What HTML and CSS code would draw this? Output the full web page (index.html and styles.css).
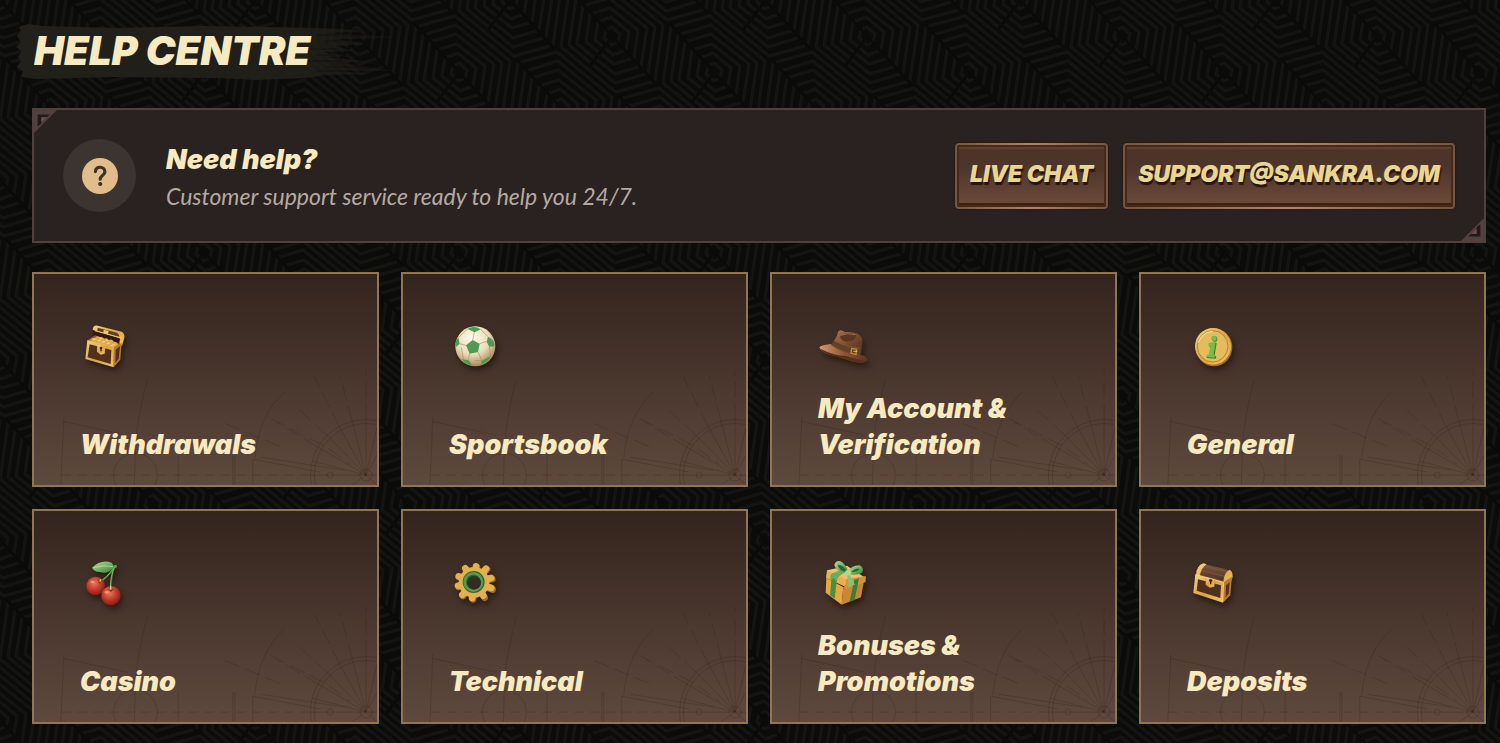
FILE: index.html
```html
<!DOCTYPE html>
<html lang="en">
<head>
    <meta charset="UTF-8">
    <meta name="viewport" content="width=device-width, initial-scale=1.0">
    <title>Help Centre</title>
    <link rel="stylesheet" href="styles.css">
</head>
<body>
    <!-- Shared gradients -->
    <svg class="defs" width="0" height="0" aria-hidden="true">
        <defs>
            <linearGradient id="gold" x1="0" y1="0" x2="1" y2="1">
                <stop offset="0" stop-color="#f6d67c"/>
                <stop offset=".5" stop-color="#dca447"/>
                <stop offset="1" stop-color="#f0c564"/>
            </linearGradient>
            <linearGradient id="wood" x1="0" y1="0" x2="0" y2="1">
                <stop offset="0" stop-color="#7d5740"/>
                <stop offset="1" stop-color="#432619"/>
            </linearGradient>
            <radialGradient id="ball" cx=".42" cy=".3" r=".75">
                <stop offset="0" stop-color="#fffbea"/>
                <stop offset=".55" stop-color="#e9dcb9"/>
                <stop offset="1" stop-color="#a37a48"/>
            </radialGradient>
            <radialGradient id="cherry" cx=".42" cy=".35" r=".7">
                <stop offset="0" stop-color="#ee7856"/>
                <stop offset=".5" stop-color="#c23e2b"/>
                <stop offset="1" stop-color="#7c150f"/>
            </radialGradient>
            <linearGradient id="leaf" x1="0" y1="0" x2="1" y2="1">
                <stop offset="0" stop-color="#b5e09a"/>
                <stop offset="1" stop-color="#357f34"/>
            </linearGradient>
            <linearGradient id="felt" x1="0" y1="0" x2="1" y2="1">
                <stop offset="0" stop-color="#b07a50"/>
                <stop offset=".5" stop-color="#7c4d31"/>
                <stop offset="1" stop-color="#4a2716"/>
            </linearGradient>
            <linearGradient id="brim" x1="0" y1="0" x2="1" y2="0">
                <stop offset="0" stop-color="#d59a6b"/>
                <stop offset=".5" stop-color="#8f5836"/>
                <stop offset="1" stop-color="#5a3420"/>
            </linearGradient>
        </defs>
    </svg>

    <main class="page">
        <h1 class="title">HELP CENTRE</h1>

        <!-- Support banner -->
        <section class="banner">
            <svg class="corner corner-top" viewBox="0 0 27 27" aria-hidden="true">
                <path d="M0 0h27L0 27z" fill="#51403b"/>
                <path d="M5 19V6h13l-3 3H9v7z" fill="#211a18"/>
                <path d="M9 14V9h6z" fill="#69504a"/>
            </svg>
            <div class="help-icon">
                <svg viewBox="0 0 36 36" width="36" height="36" aria-hidden="true">
                    <circle cx="18" cy="18" r="18" fill="#e2bd8b"/>
                    <path d="M13.4 13.6c0-6.1 9.5-5.6 9.5.2 0 3.8-4.7 3.6-4.7 7.4" fill="none" stroke="#3b312d" stroke-width="3.2" stroke-linecap="round"/>
                    <circle cx="18.2" cy="26" r="2.1" fill="#3b312d"/>
                </svg>
            </div>
            <div class="banner-text">
                <h2>Need help?</h2>
                <p>Customer support service ready to help you 24/7.</p>
            </div>
            <div class="banner-actions">
                <button class="btn" type="button">LIVE CHAT</button>
                <button class="btn" type="button">SUPPORT@SANKRA.COM</button>
            </div>
            <svg class="corner corner-bottom" viewBox="0 0 27 27" aria-hidden="true">
                <path d="M0 0h27L0 27z" fill="#51403b"/>
                <path d="M5 19V6h13l-3 3H9v7z" fill="#211a18"/>
                <path d="M9 14V9h6z" fill="#69504a"/>
            </svg>
        </section>

        <!-- Topics -->
        <nav class="topics" aria-label="Help topics">
            <a class="card" href="#withdrawals">
                <svg class="icon" viewBox="60 39 144 144" aria-hidden="true">
                    <path d="M99 61l88 24-6 23-80-28z" fill="#35190e"/>
                    <path d="M98 59q2-15 15-12l72 18q10 5 8 19l-7 23-8-3 1-19z" fill="url(#gold)"/>
                    <path d="M113 53l58 15q8 5 7 13l-66-18z" fill="#5d3d2b"/>
                    <path d="M104 66l76 22-6 14-62-20z" fill="#35190e"/>
                    <path d="M104 62l80 22" stroke="#f2cd78" stroke-width="3"/>
                    <path d="M131 59l15 4-2 10-14-4z" fill="#f0c765"/>
                    <path d="M83 91l22-15 79 27-22 20z" fill="#925b20"/>
                    <path d="M90 91q5-11 15-7 5-9 14-2 7-4 14 4 9-4 13 4 11-5 15 5 10-1 14 9l-17 14z" fill="#dfac49"/>
                    <path d="M99 90l8-4m7 7l9-4m3 8l10-3m4 8l10-4m3 9l10-3M118 83l7 3m13 4l6 3" stroke="#f8dd8c" stroke-width="3"/>
                    <path d="M82 90l80 21-1 61-85-25z" fill="url(#gold)"/>
                    <path d="M89 103l65 17-2 42-69-20z" fill="#50301f"/>
                    <path d="M162 111l23-12-4 50-20 23z" fill="#b57b30"/>
                    <path d="M167 119l13-11-4 38-10 13z" fill="#51301e"/>
                    <path d="M112 104l24 6-2 21-12 3-11-9z" fill="url(#gold)"/>
                    <circle cx="123" cy="114" r="4" fill="#3b200f"/>
                    <path d="M123 114v10" stroke="#3b200f" stroke-width="4"/>
                </svg>
                <span class="card-title">Withdrawals</span>
            </a>
            <a class="card" href="#sportsbook">
                <svg class="icon" viewBox="57 39 144 144" aria-hidden="true">
                    <circle cx="136" cy="109" r="60" fill="url(#ball)"/>
                    <g fill="#4f9a54">
                        <path d="M128 90l21 11-5 25-25 5-11-25z"/>
                        <path d="M112 57q20-12 40 1l-18 9z"/>
                        <path d="M77 112q-3-18 8-31l4 20z"/>
                        <path d="M174 80q20 9 20 29l-16 1-8-14z"/>
                        <path d="M95 147l21 4 12 16q-20 0-33-20z"/>
                        <path d="M154 153l28-15q-7 16-27 26z"/>
                    </g>
                    <path d="M128 90l5-23m16 34l21-7m-26 32l12 27m-37-22l-5 20m-6-45l-20-5m-1-20l25-24m40 1l22 22m4 30l4 28m-88-25l6 34m33 5l26-1" fill="none" stroke="#a6906a" stroke-width="2"/>
                </svg>
                <span class="card-title">Sportsbook</span>
            </a>
            <a class="card" href="#account">
                <svg class="icon" viewBox="54 39 144 144" aria-hidden="true">
                    <path d="M94 102q-28 2-36 10 5 19 48 26l54 17q35 8 44-4-2-13-28-18z" fill="url(#brim)"/>
                    <path d="M61 116q38 20 78 22 43 15 62 14-15 12-57-2l-42-12q-35-7-41-22z" fill="#592e1b"/>
                    <path d="M93 105q18-22 21-40 8-9 20 1 43-3 52 18 4 16-4 53-51-4-89-32z" fill="url(#felt)"/>
                    <path d="M120 78q20-16 49-4-1 20-31 21-18-4-18-17z" fill="#5c3622"/>
                    <path d="M122 76q20-9 44-2" fill="none" stroke="#a06f4b" stroke-width="3"/>
                    <path d="M102 92q35 20 80 23l-2 21q-50-4-87-31z" fill="#634029"/>
                    <path d="M103 92q35 20 79 22M94 105q40 26 86 31" fill="none" stroke="#8a5a38" stroke-width="2"/>
                    <path d="M155 115l15 3-2 15-15-3z" fill="none" stroke="#bd8c35" stroke-width="4"/>
                    <path d="M160 124h12" stroke="#e3bd68" stroke-width="3"/>
                </svg>
                <span class="card-title">My Account &amp; Verification</span>
            </a>
            <a class="card" href="#general">
                <svg class="icon" viewBox="51 39 144 144" aria-hidden="true">
                    <ellipse cx="132" cy="112" rx="55" ry="57" fill="#a87124"/>
                    <ellipse cx="129" cy="109" rx="54" ry="55" fill="url(#gold)"/>
                    <ellipse cx="128" cy="109" rx="46" ry="47" fill="#e4bc5d" stroke="#b7842f" stroke-width="3"/>
                    <path d="M85 98q10-31 43-34" fill="none" stroke="#ffec9d" stroke-width="3"/>
                    <path d="M119 102l21-4-6 38 5 4-2 6-27-2 2-6 6-2 4-24-5-3z" fill="#3d7f2d"/>
                    <path d="M116 99l21-4-6 38 4 4-1 6-25-2 1-6 7-2 4-24-6-3z" fill="#78bd48"/>
                    <circle cx="134" cy="87" r="8" fill="#3d7f2d"/>
                    <circle cx="132" cy="85" r="8" fill="#79bd4b"/>
                </svg>
                <span class="card-title">General</span>
            </a>
            <a class="card" href="#casino">
                <svg class="icon" viewBox="60 45 144 144" aria-hidden="true">
                    <path d="M164 64q-16 30-48 50M164 64q-12 30-12 72" fill="none" stroke="#427e3a" stroke-width="5"/>
                    <path d="M163 64q-16 29-45 47M164 64q-13 30-13 67" fill="none" stroke="#a8cb77" stroke-width="2"/>
                    <circle cx="166" cy="64" r="5" fill="#59a14d"/>
                    <path d="M96 68q28-27 59-15l8 12q-19 25-45 16-16-1-22-13z" fill="url(#leaf)"/>
                    <path d="M101 68q26-9 58-3" fill="none" stroke="#cceaaf" stroke-width="2"/>
                    <circle cx="107" cy="123" r="28" fill="url(#cherry)"/>
                    <circle cx="153" cy="152" r="29" fill="url(#cherry)"/>
                    <path d="M114 105q7 5 13-1l-8 12zM143 131q10 6 19-1l-9 11z" fill="#71331c"/>
                    <path d="M123 103l-4 7m33 12v12" stroke="#b9d583" stroke-width="4"/>
                    <ellipse cx="97" cy="111" rx="6" ry="4" fill="#ffb08c" opacity=".65"/>
                    <ellipse cx="140" cy="142" rx="7" ry="4" fill="#ffb08c" opacity=".65"/>
                </svg>
                <span class="card-title">Casino</span>
            </a>
            <a class="card" href="#technical">
                <svg class="icon" viewBox="57 45 144 144" aria-hidden="true">
                    <g stroke="#a06a25" stroke-width="20" stroke-linecap="round">
                        <path d="M141 67l-12 96M108 73l56 85M88 97l100 37M86 126l101-24M99 153l72-80"/>
                    </g>
                    <g stroke="#e3b04f" stroke-width="20" stroke-linecap="round">
                        <path d="M138 64l-12 95M106 70l54 82M86 94l98 35M84 122l99-23M97 149l71-78"/>
                    </g>
                    <circle cx="132" cy="112" r="46" fill="#e3b04f"/>
                    <circle cx="131" cy="111" r="33" fill="#2f6a2d"/>
                    <circle cx="130" cy="111" r="26" fill="none" stroke="#5c984f" stroke-width="8"/>
                    <circle cx="132" cy="113" r="21" fill="#243c20"/>
                    <circle cx="135" cy="115" r="17" fill="#3a2923"/>
                </svg>
                <span class="card-title">Technical</span>
            </a>
            <a class="card" href="#bonuses">
                <svg class="icon" viewBox="54 45 144 144" aria-hidden="true">
                    <path d="M79 99l51 27-5 53-48-36z" fill="#e8a743"/>
                    <path d="M130 126l62-18-9 49-58 22z" fill="#c98636"/>
                    <path d="M82 76l59-14 56 37-60 21-57-26z" fill="#f0c173"/>
                    <path d="M81 76l56 27v23l-59-27z" fill="#edae4d"/>
                    <path d="M137 103l60-10v18l-60 21z" fill="#d69439"/>
                    <path d="M96 84l16 8-8 69-14-11z" fill="#4d8e3d"/>
                    <path d="M163 104l14-4-13 64-15 6z" fill="#3a7c39"/>
                    <path d="M93 88q25-17 43-7l-20 14-9 14-5-9-13 5z" fill="#6cab5c"/>
                    <path d="M147 85l18 35-10-1-9 9-5-42z" fill="#86c277"/>
                    <path d="M138 83q-35-7-35-24 7-17 24-7 17 16 17 32z" fill="url(#leaf)"/>
                    <path d="M145 83q6-22 34-22 15 8 7 23-18 9-40 3z" fill="url(#leaf)"/>
                    <path d="M113 59q17-1 27 21-24-3-27-21M153 81q12-13 25-10 1 8-25 10" fill="#236b2e"/>
                    <ellipse cx="144" cy="83" rx="9" ry="8" fill="#a9dc90"/>
                </svg>
                <span class="card-title">Bonuses &amp; Promotions</span>
            </a>
            <a class="card" href="#deposits">
                <svg class="icon" viewBox="51 45 144 144" aria-hidden="true">
                    <path d="M78 94q2-32 19-38l67 15q23 5 22 35l-16 17z" fill="url(#wood)"/>
                    <path d="M105 65l65 14M94 77l70 17M89 90l72 19" stroke="#85614a" stroke-width="2"/>
                    <path d="M78 90q2-29 22-35l10 3q-18 11-21 38zM160 113q1-29 18-39 11 4 10 22l-7 18-21 11z" fill="url(#gold)"/>
                    <path d="M76 88l86 23-3 62-89-29z" fill="url(#gold)"/>
                    <path d="M84 103l69 18-2 38-71-22z" fill="#50301f"/>
                    <path d="M162 111l24-16-5 56-22 22z" fill="#b8792b"/>
                    <path d="M168 121l11-9-3 33-9 12z" fill="#56331f"/>
                    <path d="M108 96l27 7-2 22-14 3-12-9z" fill="url(#gold)" stroke="#8d5a20" stroke-width="1"/>
                    <circle cx="122" cy="106" r="5" fill="#3b200f"/>
                    <path d="M122 106v12" stroke="#3b200f" stroke-width="4"/>
                    <path d="M77 89l84 23-2 57" fill="none" stroke="#ffe090" stroke-width="2"/>
                </svg>
                <span class="card-title">Deposits</span>
            </a>
        </nav>
    </main>
</body>
</html>
```
FILE: styles.css
```css
* {
    box-sizing: border-box;
}
body {
    margin: 0;
    font-family: Inter, Lato, "Liberation Sans", sans-serif;
    font-style: italic;
    /* single-storey a */
    font-feature-settings: "cv11";
    color: #f8eac0;
    background-color: #0b0b09;
    /* nested hexagon maze, repeats every 255 x 180 */
    background-image: url("data:image/svg+xml,%3Csvg xmlns='http://www.w3.org/2000/svg' xmlns:xlink='http://www.w3.org/1999/xlink' width='255' height='180'%3E%3Cdefs%3E%3Cg id='h' fill='none' stroke='%23141412' stroke-width='3' stroke-linejoin='round'%3E%3Cpath d='M-51 11-43-45-4-56 51-11 43 45 4 56ZM-43 9-36-37-3-47 43-9 36 37 3 47ZM-35 8-29-30-3-38 35-8 29 30 3 38ZM-26 6-22-22-2-28 26-6 22 22 2 28ZM-17 4-14-14-1-19 17-4 14 14 1 19ZM-8 2-6-6 0-9 8-2 6 6 0 9Z'/%3E%3Cpath d='M-44-48 44 48M2-2-22 30' stroke='%230a0a09'/%3E%3C/g%3E%3C/defs%3E%3Cuse xlink:href='%23h'/%3E%3Cuse xlink:href='%23h' x='255'/%3E%3Cuse xlink:href='%23h' y='180'/%3E%3Cuse xlink:href='%23h' x='255' y='180'/%3E%3Cuse xlink:href='%23h' x='102' y='36'/%3E%3Cuse xlink:href='%23h' x='102' y='216'/%3E%3Cuse xlink:href='%23h' x='204' y='72'/%3E%3Cuse xlink:href='%23h' x='-51' y='72'/%3E%3Cuse xlink:href='%23h' x='51' y='108'/%3E%3Cuse xlink:href='%23h' x='306' y='108'/%3E%3Cuse xlink:href='%23h' x='153' y='144'/%3E%3Cuse xlink:href='%23h' x='153' y='-36'/%3E%3C/svg%3E");
}
.defs {
    position: absolute;
}
.page {
    padding: 22px 14px 20px 32px;
}

/* Title on a brush stroke */
.title {
    width: 380px;
    margin: 0 0 28px -16px;
    padding: 0 0 0 18px;
    font-size: 40px;
    line-height: 58px;
    font-weight: 900;
    white-space: nowrap;
    background: url("data:image/svg+xml,%3Csvg xmlns='http://www.w3.org/2000/svg' viewBox='0 0 380 58'%3E%3Cdefs%3E%3ClinearGradient id='g'%3E%3Cstop stop-color='%2322201a'/%3E%3Cstop offset='.75' stop-color='%2322201a' stop-opacity='.9'/%3E%3Cstop offset='1' stop-color='%2322201a' stop-opacity='.2'/%3E%3C/linearGradient%3E%3C/defs%3E%3Cpath fill='url(%23g)' d='M3 5 12 2 26 4 100 6 190 4 300 6 343 8 343 10 310 11 378 15 378 16 322 17 350 22 320 24 337 29 305 30 332 34 310 35 349 39 325 41 378 49 325 49 353 52 310 53 290 56 240 58 200 56 100 55 20 57 5 55 7 49 1 45 5 39 2 35 6 29 0 25 5 20 1 14 5 9Z'/%3E%3Cg stroke='%230f0f0c' stroke-width='1' opacity='.6'%3E%3Cpath d='M300 13h52M310 19h55M290 27h40M300 33h50M290 39h40M310 45h52M300 49h40'/%3E%3C/g%3E%3C/svg%3E") left center / 380px 58px no-repeat;
}

/* Support banner */
.banner {
    position: relative;
    display: flex;
    align-items: center;
    min-height: 135px;
    margin-bottom: 29px;
    padding: 0 29px;
    border: 2px solid #51403b;
    background: #292220;
}
.corner {
    position: absolute;
    width: 25px;
    height: 25px;
}
.corner-top {
    top: -1px;
    left: -1px;
}
.corner-bottom {
    right: -1px;
    bottom: -1px;
    transform: rotate(180deg);
}
.help-icon {
    display: flex;
    flex: none;
    align-items: center;
    justify-content: center;
    width: 73px;
    height: 73px;
    margin-right: 30px;
    border-radius: 50%;
    background: #3b3431;
}
.banner-text {
    flex: 1;
    padding-top: 4px;
}
.banner-text h2 {
    margin: 0;
    font-size: 27px;
    line-height: 36px;
    font-weight: 900;
}
.banner-text p {
    margin: 0;
    font-family: Lato, "Liberation Sans", sans-serif;
    font-size: 23px;
    line-height: 36px;
    color: #b5aaa0;
}
.banner-actions {
    display: flex;
    gap: 15px;
}
.btn {
    height: 66px;
    padding: 0 13px 3px;
    border: 2px solid transparent;
    border-radius: 4px;
    background:
        linear-gradient(#4c3327, #4e352c 35%, #6d4c3a) padding-box,
        linear-gradient(90deg, #79543d, #b0866a 50%, #79543d) border-box;
    box-shadow: inset 0 0 0 2px #432a1b, inset 0 4px 2px #67442f, inset 0 -4px 0 #40200c, 0 0 2px #160e0b;
    color: #e9d692;
    font-family: inherit;
    font-style: italic;
    font-size: 23px;
    font-weight: 900;
    text-shadow: 1px 3px 1px #26150d;
    cursor: pointer;
}
.btn:hover {
    filter: brightness(1.15);
}

/* Topic cards */
.topics {
    display: grid;
    grid-template-columns: repeat(4, 1fr);
    gap: 22px;
}
.card {
    display: flex;
    flex-direction: column;
    justify-content: space-between;
    min-height: 215px;
    padding: 49px 46px 22px;
    border: 2px solid #927653;
    color: inherit;
    text-decoration: none;
    /* chart lines along the bottom edge */
    background:
        url("data:image/svg+xml,%3Csvg xmlns='http://www.w3.org/2000/svg' viewBox='0 0 345 130'%3E%3Cg fill='none' stroke='%232d1b16' stroke-opacity='.25'%3E%3Ccircle cx='334' cy='120' r='56'/%3E%3Ccircle cx='334' cy='120' r='52'/%3E%3Ccircle cx='334' cy='120' r='6'/%3E%3Ccircle cx='298' cy='120' r='3'/%3E%3Ccircle cx='102' cy='120' r='22'/%3E%3Cpath d='M28 120H278' stroke-dasharray='9 7'/%3E%3Cpath d='M278 120h67M334 120v-56M334 120l-14-54M334 120l-27-49M334 120l-39-40M334 120l-48-28M334 120l-54-14M334 120l11-48M334 120l11-20M334 120l11 10M334 120l-14 10M27 130l3-68M30 66l64 14M101 130l1-40Q104 60 114 24M145 130v-30M200 130v-30M202 130v-30M220 130v-26l68 13M222 103Q226 60 252 36M228 102l84 13'/%3E%3Cpath stroke-dasharray='16 6' d='M192 68l60 25M238 63l55 28 25 18M334 64V14M307 71l-25-50M320 66L308 20M295 80l-32-29M286 92l-42-25'/%3E%3C/g%3E%3C/svg%3E") right bottom / 100% auto no-repeat,
        linear-gradient(#33241d, #5f493e);
}
.card:hover {
    border-color: #c9a878;
}
.icon {
    width: 48px;
    height: 48px;
    overflow: visible;
    filter: drop-shadow(2px 4px 3px rgba(20, 10, 5, 0.6));
}
.card-title {
    font-size: 27px;
    line-height: 36px;
    font-weight: 900;
}
```
